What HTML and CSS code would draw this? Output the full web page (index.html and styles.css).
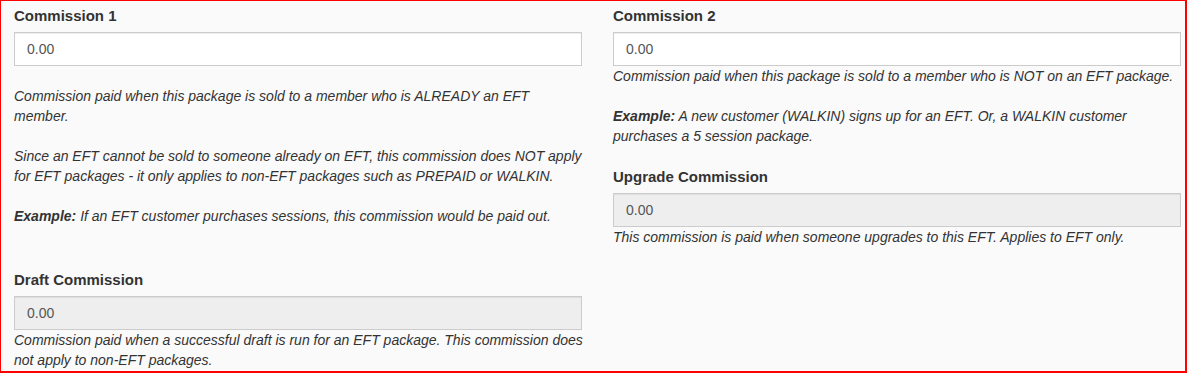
FILE: index.html
```html
<!DOCTYPE html>
<html lang="en">
<head>
    <meta charset="UTF-8">
    <meta name="viewport" content="width=device-width, initial-scale=1.0">
    <title>Package Commissions</title>
    <link rel="stylesheet" href="styles.css">
</head>
<body>
    <div class="commission-panel">
        <div class="commission-col">
            <div class="form-group">
                <label for="commission1">Commission 1</label>
                <input type="text" id="commission1" value="0.00">
                <p class="help-block spaced">
                    Commission paid when this package is sold to a member who is ALREADY an EFT member.<br><br>
                    Since an EFT cannot be sold to someone already on EFT, this commission does NOT apply for EFT packages - it only applies to non-EFT packages such as PREPAID or WALKIN.<br><br>
                    <strong>Example:</strong> If an EFT customer purchases sessions, this commission would be paid out.
                </p>
            </div>
            <div class="form-group">
                <label for="draftCommission">Draft Commission</label>
                <input type="text" id="draftCommission" value="0.00" disabled>
                <p class="help-block wide">Commission paid when a successful draft is run for an EFT package. This commission does not apply to non-EFT packages.</p>
            </div>
        </div>

        <div class="commission-col">
            <div class="form-group">
                <label for="commission2">Commission 2</label>
                <input type="text" id="commission2" value="0.00">
                <p class="help-block">
                    Commission paid when this package is sold to a member who is NOT on an EFT package.<br><br>
                    <strong>Example:</strong> A new customer (WALKIN) signs up for an EFT. Or, a WALKIN customer purchases a 5 session package.
                </p>
            </div>
            <div class="form-group">
                <label for="upgradeCommission">Upgrade Commission</label>
                <input type="text" id="upgradeCommission" value="0.00" disabled>
                <p class="help-block">This commission is paid when someone upgrades to this EFT. Applies to EFT only.</p>
            </div>
        </div>
    </div>
</body>
</html>
```

FILE: styles.css
```css
body {
    margin: 0;
    font-family: "Liberation Sans", Arial, sans-serif;
    font-size: 14px;
    line-height: 20px;
    color: #333;
}
.commission-panel {
    box-sizing: border-box;
    width: 1187px;
    height: 373px;
    border: solid #ff0000;
    border-width: 1px 2px 2px 1px;
    background-color: #fafafa;
    padding: 5px 0 0 13px;
    display: grid;
    grid-template-columns: 568px 568px;
    column-gap: 31px;
    align-content: start;
    overflow: hidden;
}
.form-group {
    margin-bottom: 21px;
}
label {
    display: block;
    font-size: 15px;
    font-weight: bold;
    line-height: 20px;
    margin-bottom: 6px;
    color: #333;
}
input {
    display: block;
    box-sizing: border-box;
    width: 100%;
    height: 34px;
    padding: 6px 12px;
    font-family: inherit;
    font-size: 14px;
    color: #555;
    background-color: #fff;
    border: 1px solid #ccc;
    border-radius: 0;
    box-shadow: inset 0 1px 1px rgba(0,0,0,0.075);
    margin: 0;
}
input:disabled {
    background-color: #eee;
    color: #555;
}
.help-block {
    margin: 0;
    font-style: italic;
    color: #333;
}
.help-block.spaced {
    margin: 20px 0 44px;
}
.help-block.wide {
    margin-right: -5px;
}
```
